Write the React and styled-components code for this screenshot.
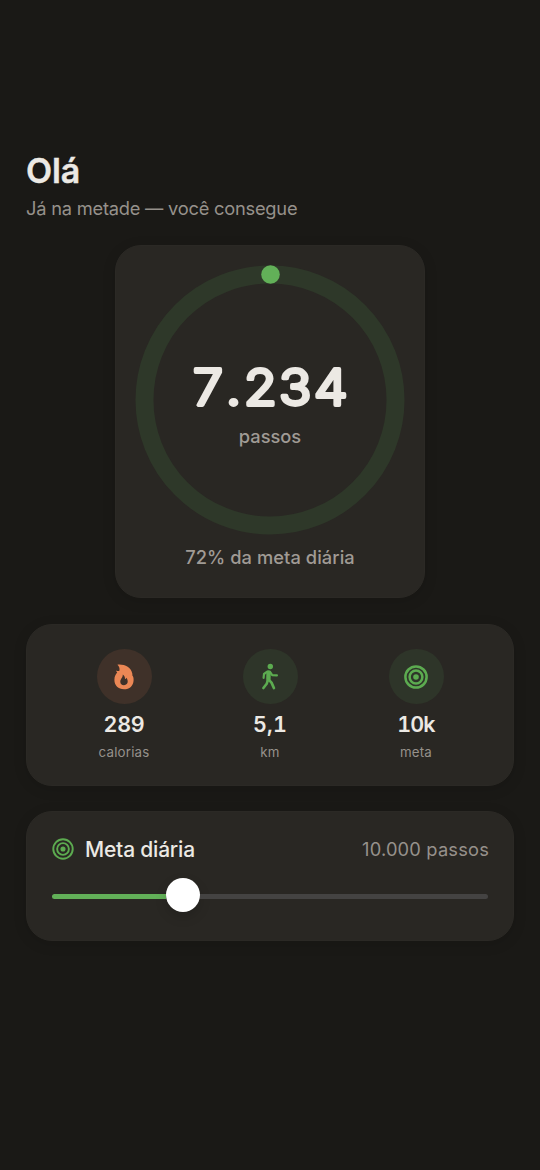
import React from 'react';
import styled, { createGlobalStyle } from 'styled-components';

const GlobalStyle = createGlobalStyle`
    * {
        box-sizing: border-box;
    }

    body {
        margin: 0;
        background-color: #1a1916;
        font-family: Inter, 'Liberation Sans', sans-serif;
        color: #ece9e4;
    }
`;

const FlameIcon = () => (
    <svg width="20" height="26" viewBox="0 0 20 26">
        <path
            fill="#eb8755"
            fillRule="evenodd"
            d="M3.4 0.7C10.5 0 17 3.4 18.2 9.2C18.5 10.4 18.3 11 18.4 11.6C19.4 12.9 19.7 14.3 19.6 16.2C19.4 21.8 15.6 25.3 10 25.3C4.3 25.3 0.4 21.7 0.4 16.1C0.4 12.6 1.5 10.5 3.2 8.6C2.6 8 2.3 7.3 2.2 6.4C3.4 7.1 4.5 7.2 5.4 6.7C5.9 4.4 5.2 2.2 3.4 0.7ZM10 21.2C12.4 21.2 13.7 19.6 13.7 17.6C13.7 16 13.2 14.8 12.4 13.8C12.2 14.6 11.7 15 11 15.1C11.1 13.2 10.4 11.6 8.8 10.4C8.9 13.9 6.3 14.7 6.3 17.8C6.3 19.9 7.7 21.2 10 21.2Z"
        />
    </svg>
);

const WalkIcon = () => (
    <svg width="18" height="28" viewBox="0 0 18 28">
        <circle cx="9.3" cy="3.5" r="2.7" fill="#5cab50" />
        <g fill="none" stroke="#5cab50" strokeLinecap="round" strokeLinejoin="round">
            <path d="M7.6 9.5L7.4 16.2" strokeWidth="4.4" />
            <path d="M6.2 8.7L3 11L2.6 14.9" strokeWidth="2.2" />
            <path d="M9 8.9L11.2 12.1L15.9 12.4" strokeWidth="2.2" />
            <path d="M7.9 16.8L10.5 19.6L12.9 25" strokeWidth="2.7" />
            <path d="M6.6 17.8L5.7 20.8L2.4 25" strokeWidth="2.6" />
        </g>
    </svg>
);

const TargetIcon = ({ size, ring = 2.1 }) => (
    <svg width={size} height={size} viewBox="0 0 24 24">
        <g fill="none" stroke="#5cab50" strokeWidth={ring}>
            <circle cx="12" cy="12" r="10.6" />
            <circle cx="12" cy="12" r="6.4" />
        </g>
        <circle cx="12" cy="12" r="2.8" fill="#5cab50" />
    </svg>
);

const stats = [
    { label: 'calorias', value: '289', spacing: '-0.2px', tint: '#3f3129', icon: <FlameIcon /> },
    { label: 'km', value: '5,1', spacing: '0.2px', tint: '#2e3529', icon: <WalkIcon /> },
    { label: 'meta', value: '10k', spacing: '-0.9px', tint: '#2e3529', icon: <TargetIcon size={24} ring={2.5} /> },
];

const App = () => {
    return (
        <Screen>
            <GlobalStyle />

            <Header>
                <Greeting>Olá</Greeting>
                <Message>Já na metade — você consegue</Message>
            </Header>

            <RingCard>
                <Ring viewBox="0 0 270 270">
                    <circle cx="135" cy="135" r="125.5" fill="none" stroke="#2e3829" strokeWidth="18" />
                    <circle cx="135.5" cy="9.5" r="9.3" fill="#62b058" />
                    <Steps x="53.8 84.2 101 133.3 165.8" y="139.9" transform="scale(1.08 1)">7.234</Steps>
                    <StepsUnit x="135" y="177.6">passos</StepsUnit>
                </Ring>
                <RingCaption>72% da meta diária</RingCaption>
            </RingCard>

            <StatsCard>
                {stats.map(item => (
                    <Stat key={item.label}>
                        <IconCircle $tint={item.tint}>{item.icon}</IconCircle>
                        <StatValue $spacing={item.spacing}>{item.value}</StatValue>
                        <StatLabel>{item.label}</StatLabel>
                    </Stat>
                ))}
            </StatsCard>

            <GoalCard>
                <GoalHeader>
                    <TargetIcon size={22} />
                    <GoalTitle>Meta diária</GoalTitle>
                    <GoalValue>10.000 passos</GoalValue>
                </GoalHeader>
                <Slider>
                    <SliderFill />
                    <SliderThumb />
                    <SliderRest />
                </Slider>
            </GoalCard>
        </Screen>
    );
};

export default App;

const Screen = styled.main`
    display: flex;
    flex-direction: column;
    min-height: 1170px;
    padding: 150px 26px 0;
    background-color: #1a1916;
`;

const Header = styled.header`
    height: 95px;
`;

const Greeting = styled.h1`
    margin: 0;
    font-size: 34px;
    line-height: 42px;
    font-weight: 600;
    letter-spacing: -0.1px;
    -webkit-text-stroke: 0.4px #ece9e4;
`;

const Message = styled.p`
    margin: 4px 0 0;
    font-size: 18.3px;
    line-height: 25px;
    letter-spacing: -0.23px;
    color: #96918b;
`;

const Card = styled.section`
    background-color: #292723;
    border: 1px solid #2b2925;
    border-radius: 26px;
    box-shadow: 0 3px 14px rgba(0, 0, 0, 0.12);
`;

const RingCard = styled(Card)`
    display: flex;
    flex-direction: column;
    align-items: center;
    align-self: center;
    width: 310px;
    height: 353px;
    padding-top: 19px;
`;

const Ring = styled.svg`
    width: 270px;
    height: 270px;
    flex: none;
`;

const Steps = styled.text`
    font-size: 49.4px;
    font-weight: 300;
    fill: #ece9e4;
    stroke: #ece9e4;
    stroke-width: 3.8px;
    stroke-linejoin: round;
`;

const StepsUnit = styled.text`
    font-size: 18.3px;
    font-weight: 500;
    text-anchor: middle;
    fill: #a09b95;
`;

const RingCaption = styled.p`
    margin: 9px 0 0;
    font-size: 18.3px;
    line-height: 26px;
    font-weight: 500;
    letter-spacing: 0.06px;
    color: #a09b95;
`;

const StatsCard = styled(Card)`
    display: flex;
    height: 162px;
    margin-top: 26px;
    padding: 24px 24px 0;
`;

const Stat = styled.div`
    display: flex;
    flex: 1;
    flex-direction: column;
    align-items: center;
`;

const IconCircle = styled.div`
    display: grid;
    place-items: center;
    width: 55px;
    height: 55px;
    border-radius: 50%;
    background-color: ${props => props.$tint};
`;

const StatValue = styled.div`
    margin-top: 6px;
    font-size: 21.5px;
    line-height: 28px;
    font-weight: 600;
    font-variant-numeric: tabular-nums;
    letter-spacing: ${props => props.$spacing};
`;

const StatLabel = styled.div`
    margin-top: 5px;
    font-size: 13.3px;
    line-height: 18px;
    letter-spacing: 0.2px;
    color: #96918b;
`;

const GoalCard = styled(Card)`
    height: 130px;
    margin-top: 25px;
    padding: 23px 25px 0;
`;

const GoalHeader = styled.div`
    display: flex;
    align-items: center;
    height: 28px;
`;

const GoalTitle = styled.h2`
    margin: 0 auto 0 11px;
    font-size: 21px;
    font-weight: 500;
    letter-spacing: -0.2px;
`;

const GoalValue = styled.span`
    margin-right: -1px;
    font-size: 18.3px;
    letter-spacing: 0.18px;
    color: #96918b;
`;

const Slider = styled.div`
    display: flex;
    align-items: center;
    height: 34px;
    margin-top: 15px;
`;

const SliderFill = styled.div`
    width: 114px;
    height: 5px;
    margin-top: 3px;
    border-radius: 3px 0 0 3px;
    background-color: #62b058;
`;

const SliderThumb = styled.div`
    width: 34px;
    height: 34px;
    border-radius: 50%;
    background-color: #fff;
    box-shadow: 0 5px 12px rgba(0, 0, 0, 0.15);
`;

const SliderRest = styled.div`
    flex: 1;
    height: 5px;
    margin-top: 3px;
    border-radius: 0 3px 3px 0;
    background-color: #444342;
`;
